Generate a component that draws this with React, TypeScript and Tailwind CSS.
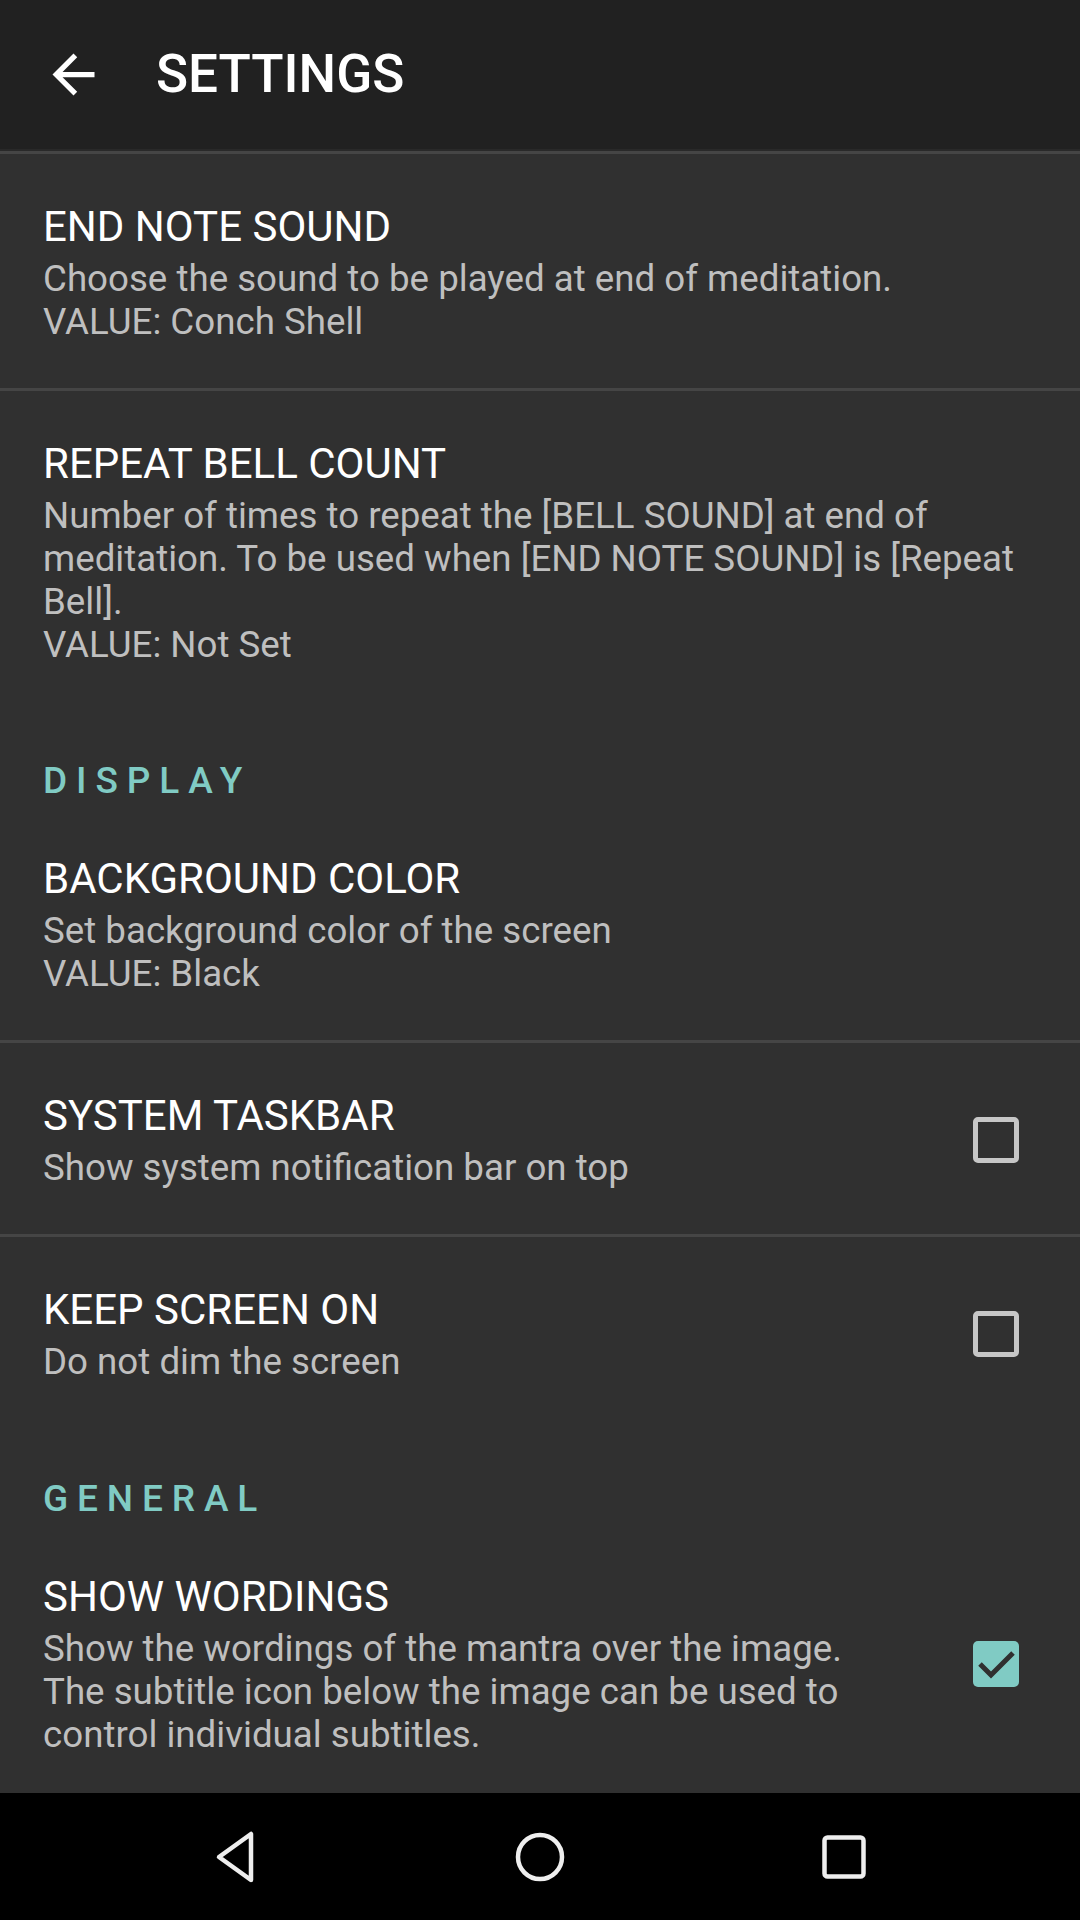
import React from "react";

type Item = {
  title: string;
  lines: React.ReactNode[];
  check?: "on" | "off";
  divider?: boolean;
};

function Checkbox({ on }: { on: boolean }) {
  if (on) {
    return (
      <div className="w-[46px] h-[46px] rounded-[5px] bg-[#80cbc4] flex items-center justify-center">
        <svg width="46" height="46" viewBox="0 0 46 46">
          <polyline points="7,23 18,34 40,12" fill="none" stroke="#303030" strokeWidth="5" />
        </svg>
      </div>
    );
  }
  return <div className="w-[46px] h-[46px] rounded-[5px] border-[5px] border-[#c6c6c6]" />;
}

function Pref({ item }: { item: Item }) {
  return (
    <>
      <div className="flex items-center pl-[43px] pr-[43px] pt-[48px] pb-[45px]">
        <div className="flex-1 min-w-0">
          <div className="text-[42px] leading-[49px] text-white">{item.title}</div>
          <div className="mt-[6px] text-[36.7px] leading-[43px] text-[#bfbfbf]">
            {item.lines.map((l, i) => (
              <div key={i}>{l}</div>
            ))}
          </div>
        </div>
        {item.check && (
          <div className="ml-[42px] mr-[18px] shrink-0">
            <Checkbox on={item.check === "on"} />
          </div>
        )}
      </div>
      {item.divider && <div className="h-[3px] bg-[#454545]" />}
    </>
  );
}

function Section({ label, first }: { label: string; first?: boolean }) {
  return (
    <div
      className={
        (first ? "pt-[48px] " : "pt-[49px] ") +
        "pl-[43px] pb-[4px] text-[37px] leading-[43px] font-medium tracking-[0.24em] text-[#80cbc4]"
      }
    >
      {label}
    </div>
  );
}

export default function App() {
  return (
    <div
      className="w-[1080px] h-[1920px] flex flex-col bg-[#303030] overflow-hidden"
      style={{ fontFamily: "Roboto, 'Noto Sans', sans-serif" }}
    >
      <div className="h-[149px] shrink-0 bg-[#212121] flex items-center pl-[42px]">
        <svg width="63" height="63" viewBox="0 0 24 24">
          <path
            d="M20 11H7.83l5.59-5.59L12 4l-8 8 8 8 1.41-1.41L7.83 13H20v-2z"
            fill="#ffffff"
          />
        </svg>
        <div className="ml-[51px] text-[53px] font-medium text-white">SETTINGS</div>
      </div>
      <div className="h-[2px] shrink-0 bg-[#292929]" />
      <div className="h-[3px] shrink-0 bg-[#454545]" />
      <div className="flex-1 min-h-0 overflow-hidden">
        <Pref
          item={{
            title: "END NOTE SOUND",
            lines: ["Choose the sound to be played at end of meditation.", "VALUE: Conch Shell"],
            divider: true,
          }}
        />
        <Pref
          item={{
            title: "REPEAT BELL COUNT",
            lines: [
              "Number of times to repeat the [BELL SOUND] at end of meditation. To be used when [END NOTE SOUND] is [Repeat Bell].",
              "VALUE: Not Set",
            ],
          }}
        />
        <Section label="DISPLAY" first />
        <Pref
          item={{
            title: "BACKGROUND COLOR",
            lines: ["Set background color of the screen", "VALUE: Black"],
            divider: true,
          }}
        />
        <Pref
          item={{
            title: "SYSTEM TASKBAR",
            lines: ["Show system notification bar on top"],
            check: "off",
            divider: true,
          }}
        />
        <Pref
          item={{
            title: "KEEP SCREEN ON",
            lines: ["Do not dim the screen"],
            check: "off",
          }}
        />
        <Section label="GENERAL" />
        <Pref
          item={{
            title: "SHOW WORDINGS",
            lines: [
              "Show the wordings of the mantra over the image.",
              "The subtitle icon below the image can be used to control individual subtitles.",
            ],
            check: "on",
          }}
        />
      </div>
      <div className="h-[127px] shrink-0 bg-black flex justify-center items-center">
        <div className="w-[304px] flex justify-center">
          <svg width="50" height="54" viewBox="0 0 50 54">
            <path
              d="M40 4 L40 50 L8 27 Z"
              fill="none"
              stroke="#eeeeee"
              strokeWidth="4.5"
              strokeLinejoin="round"
            />
          </svg>
        </div>
        <div className="w-[304px] flex justify-center">
          <svg width="54" height="54" viewBox="0 0 54 54">
            <circle cx="27" cy="27" r="22" fill="none" stroke="#eeeeee" strokeWidth="4.5" />
          </svg>
        </div>
        <div className="w-[304px] flex justify-center">
          <svg width="48" height="48" viewBox="0 0 48 48">
            <rect x="4.5" y="4.5" width="39" height="39" rx="3" fill="none" stroke="#eeeeee" strokeWidth="4.5" />
          </svg>
        </div>
      </div>
    </div>
  );
}
